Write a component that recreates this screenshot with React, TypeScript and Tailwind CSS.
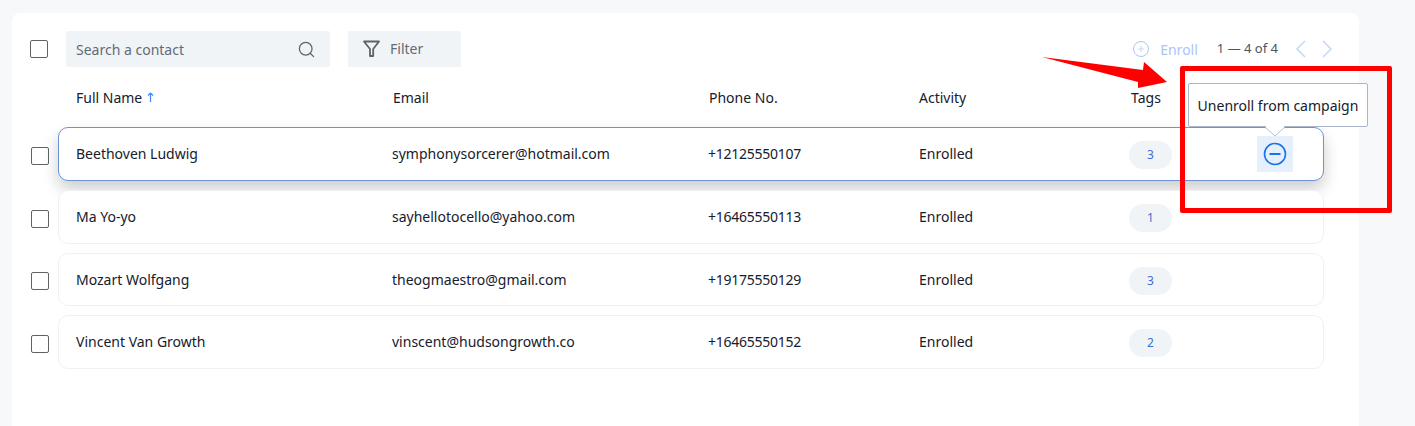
import { Search, Plus } from 'lucide-react';
import clsx from 'clsx';

const contacts = [
  { name: 'Beethoven Ludwig', email: 'symphonysorcerer@hotmail.com', phone: '+12125550107', tags: 3 },
  { name: 'Ma Yo-yo', email: 'sayhellotocello@yahoo.com', phone: '+16465550113', tags: 1 },
  { name: 'Mozart Wolfgang', email: 'theogmaestro@gmail.com', phone: '+19175550129', tags: 3 },
  { name: 'Vincent Van Growth', email: 'vinscent@hudsongrowth.co', phone: '+16465550152', tags: 2 },
];

function Checkbox() {
  return <div className="w-[18px] h-[18px] shrink-0 rounded-[2px] border border-[#5f6368] bg-white" />;
}

export default function App() {
  return (
    <div className="relative h-[426px] w-[1415px] overflow-hidden bg-[#f7f8fa] pt-[13px] pl-[12px] font-['Noto_Sans',sans-serif] text-[14px] text-[#16202c]">
      <div className="h-[413px] w-[1347px] rounded-t-lg bg-white pl-[18px] pt-[18px]">
        <div className="flex h-[36px] items-center">
          <Checkbox />
          <div className="ml-[18px] flex h-[36px] w-[264px] items-center justify-between rounded-[2px] bg-[#f1f4f6] pl-[10px] pr-[14px] text-[#5f6b76]">
            <span>Search a contact</span>
            <Search className="h-[19px] w-[19px] text-[#5f6368]" strokeWidth={1.6} />
          </div>
          <div className="ml-[18px] flex h-[36px] w-[113px] items-center rounded-[2px] bg-[#f1f4f6] pl-[15px] text-[#5f6b76]">
            <svg width="17" height="18" viewBox="0 0 17 18" fill="none" stroke="#5f6368" strokeWidth="1.8" strokeLinejoin="round">
              <path d="M1 1.5h15L10.2 9v7H7V9z" />
            </svg>
            <span className="ml-[10px] -mt-[2px]">Filter</span>
          </div>
          <div className="ml-auto mr-[26px] flex items-center">
            <div className="flex h-[16px] w-[16px] items-center justify-center rounded-full border border-[#a9c6f5]">
              <Plus className="h-[10px] w-[10px] text-[#a9c6f5]" strokeWidth={1.5} />
            </div>
            <span className="ml-[11px] text-[#a9c6f5]">Enroll</span>
            <span className="ml-[19px] text-[13px] text-[#4a5561]">1 — 4 of 4</span>
            <svg className="ml-[17px]" width="11" height="18" viewBox="0 0 11 18" fill="none" stroke="#c3d7f7" strokeWidth="1.5">
              <path d="M10 1 2 9l8 8" />
            </svg>
            <svg className="ml-[16px]" width="11" height="18" viewBox="0 0 11 18" fill="none" stroke="#c3d7f7" strokeWidth="1.5">
              <path d="M1 1l8 8-8 8" />
            </svg>
          </div>
        </div>

        <div className="flex h-[60px] items-center pl-[46px]">
          <div className="flex w-[317px] items-center gap-[5px]">
            Full Name
            <svg width="7" height="10" viewBox="0 0 7 10" fill="none" stroke="#4285f4" strokeWidth="1.2">
              <path d="M3.5 10V1M1 3.5 3.5 1 6 3.5" />
            </svg>
          </div>
          <div className="w-[316px]">Email</div>
          <div className="w-[210px]">Phone No.</div>
          <div className="w-[212px]">Activity</div>
          <div>Tags</div>
        </div>

        <div className="flex flex-col gap-[9px]">
          {contacts.map((contact, index) => (
            <div key={contact.email} className="flex items-center">
              <div className="ml-[1px] mr-[9px] mt-[4px]">
                <Checkbox />
              </div>
              <div
                className={clsx(
                  'flex w-[1266px] items-center rounded-[10px] border bg-white pl-[17px]',
                  index === 0
                    ? 'h-[54px] border-[#6b93d6] shadow-[0_8px_16px_rgba(0,0,0,0.2)]'
                    : 'h-[53.67px] border-[#f0f1f3]',
                  index !== 2 && 'pb-[1px]'
                )}
              >
                <div className="w-[316px]">{contact.name}</div>
                <div className="w-[316px]">{contact.email}</div>
                <div className="w-[211px] tracking-[-0.25px]">{contact.phone}</div>
                <div className="w-[210px]">Enrolled</div>
                <div className="mt-[3px] flex h-[28px] w-[43px] items-center justify-center rounded-full bg-[#f1f4f6] text-[12px] text-[#3b6fd8]">
                  {contact.tags}
                </div>
                {index === 0 && (
                  <div className="ml-[85px] mt-[1px] flex h-[36px] w-[36px] items-center justify-center bg-[#e6f0fc]">
                    <svg width="24" height="24" viewBox="0 0 24 24" fill="none" stroke="#1a73e8" strokeWidth="1.6">
                      <circle cx="12" cy="12" r="10.5" />
                      <path d="M6.5 12h11" strokeWidth="2" />
                    </svg>
                  </div>
                )}
              </div>
            </div>
          ))}
        </div>
      </div>

      {/* tooltip over first row */}
      <div className="absolute left-[1188px] top-[83px] flex h-[44px] w-[180px] items-center justify-center rounded-[2px] border border-[#a9b5c9] bg-white text-[14px] whitespace-nowrap">
        Unenroll from campaign
      </div>
      <svg className="absolute left-[1263px] top-[126px]" width="24" height="11" viewBox="0 0 24 11" fill="white" stroke="#b5bfd0">
        <path d="M2 1l10 9 10-9" />
        <path d="M3 0h18" stroke="white" strokeWidth="2" />
      </svg>

      {/* red annotation */}
      <svg className="absolute left-[1040px] top-[55px]" width="130" height="36" viewBox="0 0 130 36" fill="#ff0000">
        <path d="M2 2 103 15 104 7 127 27 98 33 98 27z" />
      </svg>
      <div className="absolute left-[1180px] top-[66px] h-[147px] w-[212px] rounded-[2px] border-[5px] border-[#ff0000]" />
    </div>
  );
}
